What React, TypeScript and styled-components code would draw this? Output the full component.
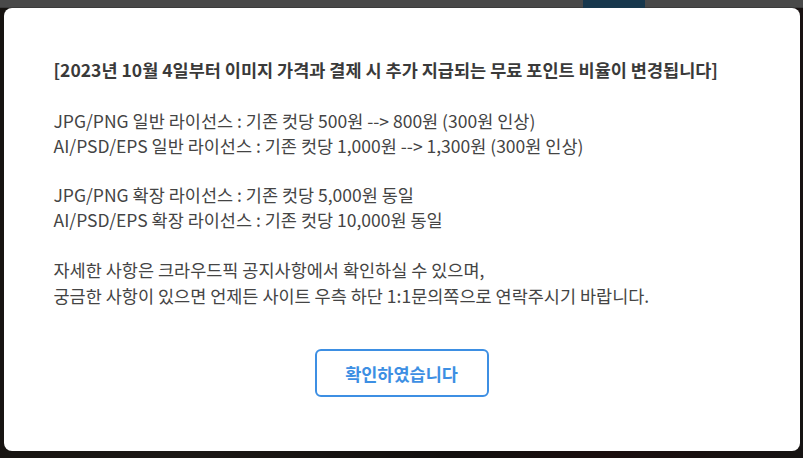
import React from 'react';
import styled, { createGlobalStyle } from 'styled-components';

const GlobalStyle = createGlobalStyle`
  * {
    box-sizing: border-box;
  }
  html, body {
    margin: 0;
    padding: 0;
    height: 100%;
  }
  body {
    font-family: 'Noto Sans CJK KR', 'Noto Sans', sans-serif;
    background: #5c524a;
    overflow: hidden;
  }
`;

const Page = styled.div`
  height: 458px;
  display: flex;
  flex-direction: column;
`;

const Header = styled.header`
  height: 40px;
  margin-top: -32px;
  display: flex;
  align-items: center;
  gap: 40px;
  padding: 0 5px;
  background: #f6f6f6;
  border-bottom: 1px solid #c8c8c8;
  font-size: 17px;
  color: #222;
`;

const NavItem = styled.span`
  font-weight: 500;
`;

const Search = styled.div`
  flex: 1;
  display: flex;
  align-items: center;
  margin-left: 48px;
  max-width: 434px;
  color: #888;
`;

const SearchInput = styled.span`
  flex: 1;
`;

const SearchButton = styled.div`
  width: 62px;
  height: 40px;
  background: #4fb8ff;
  display: flex;
  align-items: center;
  justify-content: center;
`;

const Hero = styled.div`
  flex: 1;
  background: linear-gradient(100deg, #4a4038 0%, #5e5249 30%, #3e3430 60%, #5a2f30 78%, #4a4240 100%);
`;

const Overlay = styled.div`
  position: fixed;
  inset: 0;
  background: rgba(0, 0, 0, 0.7);
  display: flex;
  align-items: center;
  justify-content: center;
`;

const Modal = styled.div`
  width: 796px;
  height: 443px;
  background: #fff;
  border-radius: 8px;
  padding: 50px 50px 0;
  display: flex;
  flex-direction: column;
`;

const Body = styled.div`
  font-size: 17.5px;
  line-height: 24.5px;
  color: #444;
`;

const Title = styled.p`
  margin: 0 0 27px;
  font-weight: 700;
  color: #3a3a3a;
`;

const Para = styled.p`
  margin: 0 0 25px;
`;

const LastPara = styled(Para)`
  line-height: 26px;
`;

const Footer = styled.div`
  display: flex;
  justify-content: center;
  margin-top: 15px;
`;

const ConfirmButton = styled.button`
  width: 174px;
  height: 48px;
  border: 2px solid #3d8fe3;
  border-radius: 6px;
  background: #fff;
  color: #3d8fe3;
  font-family: inherit;
  font-size: 17.5px;
  font-weight: 700;
  cursor: pointer;
`;

const App = () => {
  return (
    <>
      <GlobalStyle />
      <Page>
        <Header>
          <NavItem>랭킹</NavItem>
          <NavItem>매거진</NavItem>
          <Search>
            <SearchInput>이미지 검색</SearchInput>
            <SearchButton>
              <svg width="22" height="22" viewBox="0 0 24 24" fill="none" stroke="#fff" strokeWidth="3">
                <circle cx="11" cy="11" r="7" />
                <path d="M16 16l5 5" />
              </svg>
            </SearchButton>
          </Search>
        </Header>
        <Hero />
      </Page>
      <Overlay>
        <Modal>
          <Body>
            <Title>[2023년 10월 4일부터 이미지 가격과 결제 시 추가 지급되는 무료 포인트 비율이 변경됩니다]</Title>
            <Para>
              JPG/PNG 일반 라이선스 : 기존 컷당 500원 --&gt; 800원 (300원 인상)
              <br />
              AI/PSD/EPS 일반 라이선스 : 기존 컷당 1,000원 --&gt; 1,300원 (300원 인상)
            </Para>
            <Para>
              JPG/PNG 확장 라이선스 : 기존 컷당 5,000원 동일
              <br />
              AI/PSD/EPS 확장 라이선스 : 기존 컷당 10,000원 동일
            </Para>
            <LastPara>
              자세한 사항은 크라우드픽 공지사항에서 확인하실 수 있으며,
              <br />
              궁금한 사항이 있으면 언제든 사이트 우측 하단 1:1문의쪽으로 연락주시기 바랍니다.
            </LastPara>
          </Body>
          <Footer>
            <ConfirmButton>확인하였습니다</ConfirmButton>
          </Footer>
        </Modal>
      </Overlay>
    </>
  );
};

export default App;
